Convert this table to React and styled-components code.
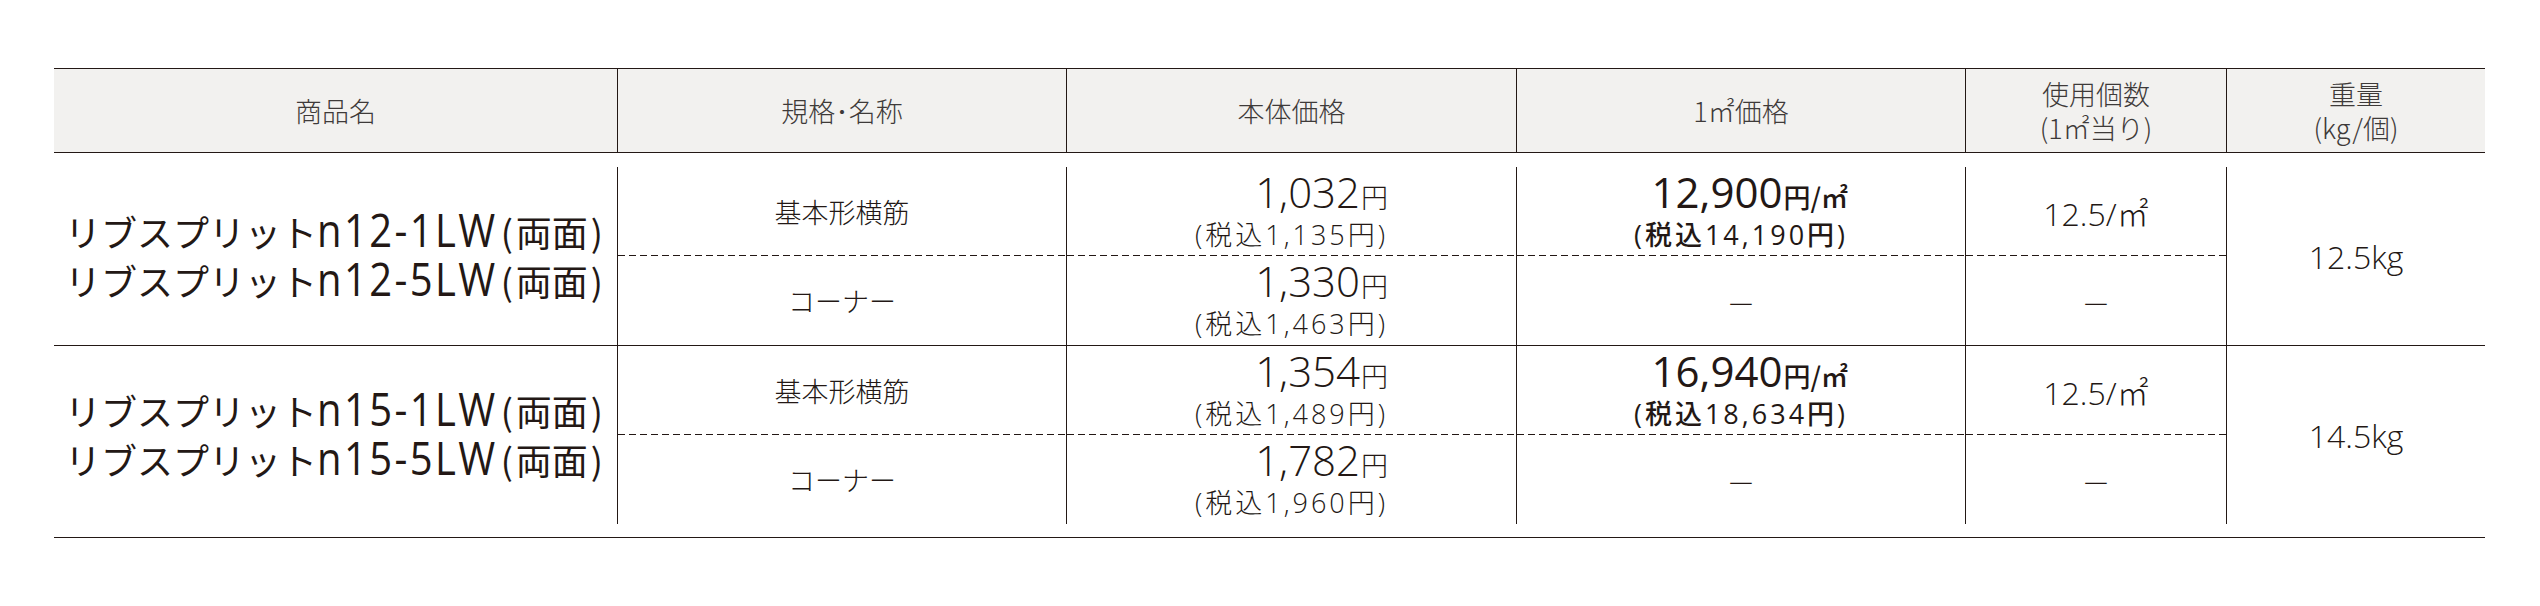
import React from 'react';
import styled, { createGlobalStyle, css } from 'styled-components';

const LINE = '#231815';
const INK = '#231815';
const COLS = '563px 449px 450px 449px 261px 259px';

const GlobalStyle = createGlobalStyle`
  html, body {
    margin: 0;
    padding: 0;
    background: #ffffff;
  }
  body {
    font-family: "Noto Sans CJK JP", "Noto Sans", sans-serif;
    color: ${INK};
  }
`;

// price table data
const groups = [
  {
    code: ['n12-1LW', 'n12-5LW'],
    weight: '12.5kg',
    rows: [
      { spec: '基本形横筋', price: '1,032', tax: '1,135', m2: '12,900', m2Tax: '14,190', usage: '12.5' },
      { spec: 'コーナー', price: '1,330', tax: '1,463' }
    ]
  },
  {
    code: ['n15-1LW', 'n15-5LW'],
    weight: '14.5kg',
    rows: [
      { spec: '基本形横筋', price: '1,354', tax: '1,489', m2: '16,940', m2Tax: '18,634', usage: '12.5' },
      { spec: 'コーナー', price: '1,782', tax: '1,960' }
    ]
  }
];

const App = () => {
  return (
    <Page>
      <GlobalStyle />
      <Table>
        <HeadRow>
          <HeadCell $first>商品名</HeadCell>
          <HeadCell>規格･名称</HeadCell>
          <HeadCell>本体価格</HeadCell>
          <HeadCell>1㎡価格</HeadCell>
          <HeadCell>使用個数<br />(1㎡当り)</HeadCell>
          <HeadCell>重量<br />(kg/個)</HeadCell>
        </HeadRow>

        <Body>
          {groups.map((group, gi) => (
            <Group key={gi}>
              <NameCell>
                {group.code.map((code) => (
                  <NameLine key={code}>
                    リブスプリット<Latin>{code}</Latin>
                    <Paren>(</Paren>両面<Paren>)</Paren>
                  </NameLine>
                ))}
              </NameCell>

              {group.rows.map((row, ri) => {
                const dashed = ri === 0;
                const cells = [
                  <Cell key="spec" $dashed={dashed}>
                    <Spec>{row.spec}</Spec>
                  </Cell>,
                  <Cell key="price" $dashed={dashed}>
                    <PriceBlock>
                      <PriceMain>{row.price}<Unit>円</Unit></PriceMain>
                      <Tax>(税込{row.tax}円)</Tax>
                    </PriceBlock>
                  </Cell>,
                  <Cell key="m2" $dashed={dashed}>
                    {row.m2 ? (
                      <PriceBlock>
                        <PriceMain $strong>{row.m2}<Unit>円/㎡</Unit></PriceMain>
                        <Tax $strong>(税込{row.m2Tax}円)</Tax>
                      </PriceBlock>
                    ) : (
                      <Dash>—</Dash>
                    )}
                  </Cell>,
                  <Cell key="usage" $dashed={dashed}>
                    {row.usage ? <Value>{row.usage}/㎡</Value> : <Dash>—</Dash>}
                  </Cell>
                ];
                if (ri === 0) {
                  cells.push(
                    <Cell key="weight" $span>
                      <Value>{group.weight}</Value>
                    </Cell>
                  );
                }
                return cells;
              })}
            </Group>
          ))}
        </Body>
      </Table>
    </Page>
  );
};

const Page = styled.div`
  padding: 68px 0 0 54px;
`;

const Table = styled.div`
  width: 2431px;
  border-top: 1px solid ${LINE};
  border-bottom: 1px solid ${LINE};
`;

const HeadRow = styled.div`
  display: grid;
  grid-template-columns: ${COLS};
  height: 83px;
  background: #f2f1ef;
  border-bottom: 1px solid ${LINE};
`;

const HeadCell = styled.div`
  display: flex;
  align-items: center;
  justify-content: center;
  text-align: center;
  font-size: 27px;
  font-weight: 300;
  line-height: 34px;
  color: #3e3a39;
  border-left: ${({ $first }) => ($first ? 'none' : `1px solid ${LINE}`)};
`;

const Body = styled.div`
  padding: 14px 0 13px;
`;

const Group = styled.div`
  display: grid;
  grid-template-columns: ${COLS};
  grid-template-rows: 89px 89px;

  & + & {
    border-top: 1px solid ${LINE};
  }
`;

const NameCell = styled.div`
  grid-row: span 2;
  display: flex;
  flex-direction: column;
  justify-content: center;
  padding-left: 11px;
`;

const NameLine = styled.div`
  font-size: 36px;
  line-height: 48px;
  white-space: nowrap;
  color: ${INK};
`;

/* the model code is set in a tall, narrow latin face in the reference */
const Latin = styled.span`
  display: inline-block;
  font-family: "Open Sans", "Noto Sans", sans-serif;
  font-size: 40px;
  letter-spacing: 2.4px;
  transform: scaleY(1.12);
  transform-origin: 50% 39px;
`;

const Paren = styled.span`
  margin: 0 3px;
`;

const Cell = styled.div`
  display: flex;
  align-items: center;
  justify-content: center;
  border-left: 1px solid ${LINE};
  ${({ $span }) => $span && css`
    grid-row: span 2;
  `}
  ${({ $dashed }) => $dashed && css`
    background-image: repeating-linear-gradient(to right, ${LINE} 0 7px, transparent 7px 11px);
    background-size: 100% 1px;
    background-position: left bottom;
    background-repeat: no-repeat;
  `}
`;

const Spec = styled.div`
  font-size: 27px;
  font-weight: 300;
  color: ${INK};
`;

const PriceBlock = styled.div`
  display: flex;
  flex-direction: column;
  align-items: flex-end;
  padding-bottom: 12px;
`;

const PriceMain = styled.div`
  font-family: "Open Sans", "Noto Sans CJK JP", sans-serif;
  font-size: 42px;
  line-height: 58px;
  font-weight: ${({ $strong }) => ($strong ? 500 : 300)};
  color: ${INK};
  white-space: nowrap;
`;

const Unit = styled.span`
  font-family: "Noto Sans CJK JP", sans-serif;
  font-size: 27px;
  line-height: 1;
  margin-left: 1px;
`;

const Tax = styled.div`
  font-family: "Open Sans", "Noto Sans CJK JP", sans-serif;
  font-size: 27px;
  line-height: 28px;
  letter-spacing: 3px;
  font-weight: ${({ $strong }) => ($strong ? 500 : 300)};
  color: ${INK};
  white-space: nowrap;
`;

const Value = styled.div`
  font-family: "Open Sans", "Noto Sans CJK JP", sans-serif;
  font-size: 32px;
  font-weight: 300;
  color: ${INK};
`;

const Dash = styled.div`
  font-size: 27px;
  font-weight: 300;
  color: ${INK};
`;

export default App;
